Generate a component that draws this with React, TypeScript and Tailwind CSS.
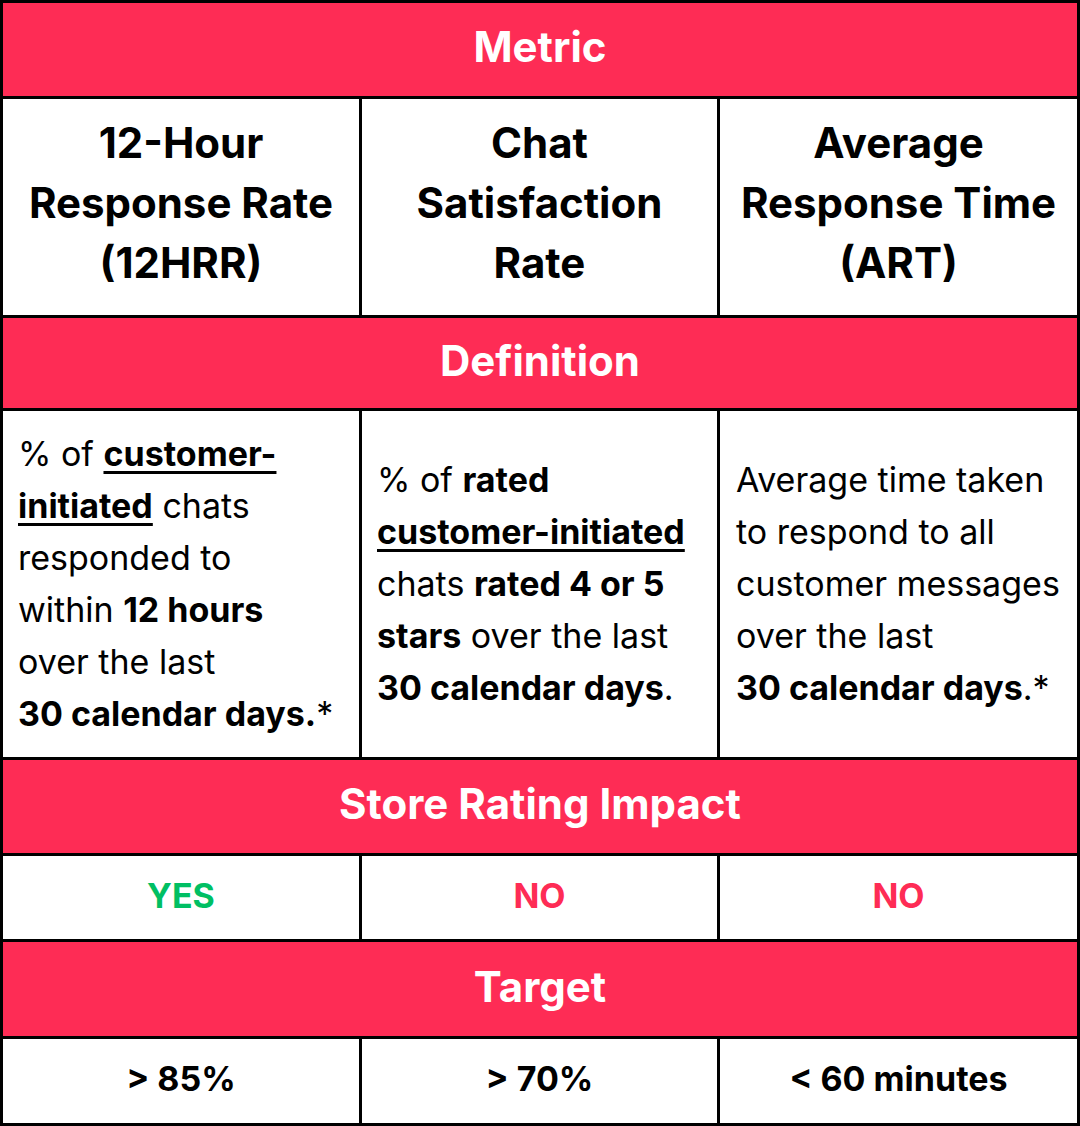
import React from 'react'

const font = { fontFamily: 'Inter, "Noto Sans", sans-serif' }

const Band = ({ label, h }: { label: string; h: string }) => (
  <div
    className={`col-span-3 ${h} bg-[#fe2c55] flex items-center justify-center pb-[6px] text-white text-[42px] font-bold`}
  >
    {label}
  </div>
)

const Cell = ({ children, className = '' }: { children: React.ReactNode; className?: string }) => (
  <div className={`bg-white flex items-center justify-center text-center ${className}`}>{children}</div>
)

const B = ({ children }: { children: React.ReactNode }) => <span className="font-bold">{children}</span>
const U = ({ children }: { children: React.ReactNode }) => (
  <span className="font-bold underline decoration-[3px] underline-offset-[5px]">{children}</span>
)

const metrics = [
  ['12-Hour', 'Response Rate', '(12HRR)'],
  ['Chat', 'Satisfaction', 'Rate'],
  ['Average', 'Response Time', '(ART)'],
]

export default function App() {
  return (
    <div style={font} className="w-[1080px] h-[1126px] bg-black p-[3px] text-black">
      <div className="grid grid-cols-[356px_355px_357px] grid-rows-[93px_216px_90px_346px_93px_83px_94px_84px] gap-[3px] h-full">
        <Band label="Metric" h="h-[93px]" />
        {metrics.map((lines) => (
          <Cell key={lines[0]} className="text-[42px] font-bold leading-[60px] pb-[8px]">
            <div>
              {lines.map((l) => (
                <div key={l}>{l}</div>
              ))}
            </div>
          </Cell>
        ))}
        <Band label="Definition" h="h-[90px]" />
        <div className="bg-white flex items-center pl-[15px] text-[34px] leading-[52px] whitespace-nowrap">
          <div>
            % of <U>customer-</U>
            <br />
            <U>initiated</U> chats
            <br />
            responded to
            <br />
            within <B>12 hours</B>
            <br />
            over the last
            <br />
            <B>30 calendar days.</B>*
          </div>
        </div>
        <div className="bg-white flex items-center pl-[15px] text-[34px] leading-[52px] whitespace-nowrap">
          <div>
            % of <B>rated</B>
            <br />
            <U>customer-initiated</U>
            <br />
            chats <B>rated 4 or 5</B>
            <br />
            <B>stars</B> over the last
            <br />
            <B>30 calendar days</B>.
          </div>
        </div>
        <div className="bg-white flex items-center pl-[16px] text-[34px] leading-[52px] whitespace-nowrap">
          <div>
            Average time taken
            <br />
            to respond to all
            <br />
            customer messages
            <br />
            over the last
            <br />
            <B>30 calendar days</B>.*
          </div>
        </div>
        <Band label="Store Rating Impact" h="h-[93px]" />
        <Cell className="text-[34px] font-bold text-[#00bf63] pb-[4px]">YES</Cell>
        <Cell className="text-[34px] font-bold text-[#fe2c55] pb-[4px]">NO</Cell>
        <Cell className="text-[34px] font-bold text-[#fe2c55] pb-[4px]">NO</Cell>
        <Band label="Target" h="h-[94px]" />
        <Cell className="text-[34px] font-bold pb-[6px]">&gt; 85%</Cell>
        <Cell className="text-[34px] font-bold pb-[6px]">&gt; 70%</Cell>
        <Cell className="text-[34px] font-bold pb-[6px]">&lt; 60 minutes</Cell>
      </div>
    </div>
  )
}
